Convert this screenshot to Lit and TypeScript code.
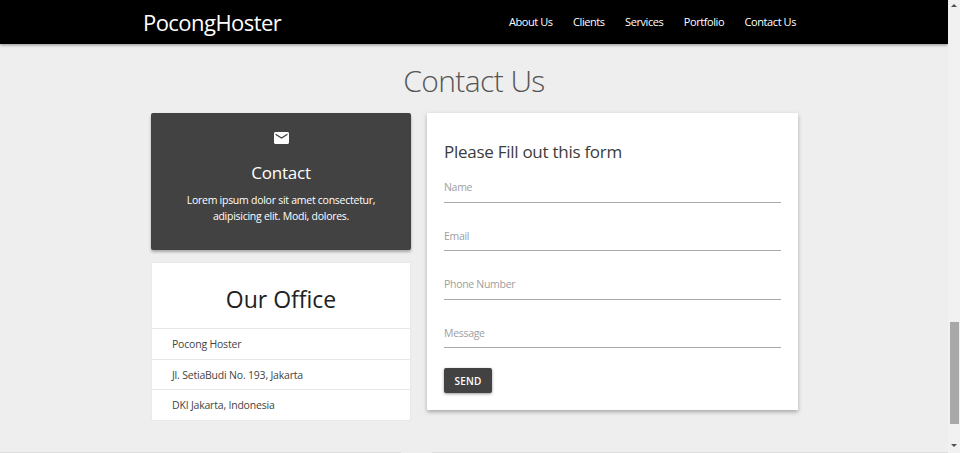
import { LitElement, html, css } from "lit";
import { customElement } from "lit/decorators.js";

@customElement("app-root")
export class AppRoot extends LitElement {
  static styles = css`
    :host { display: block; width: 960px; height: 453px; overflow: hidden; font-family: "Open Sans", "Noto Sans", sans-serif; }
    * { box-sizing: border-box; }
    .shell { display: flex; height: 453px; }
    .page { width: 948px; background: #eee; display: flex; flex-direction: column; }
    nav { height: 44px; background: #000; box-shadow: 0 1px 3px rgba(0,0,0,.4); display: flex; align-items: center; justify-content: space-between; padding: 0 152px 0 143px; color: #fff; flex: none; }
    .brand { font-size: 22px; letter-spacing: -0.55px; line-height: 44px; }
    .links { display: flex; gap: 20.4px; font-size: 11px; letter-spacing: -0.42px; padding-bottom: 1px; }
    h1 { margin: 0; height: 69px; font-weight: 300; font-size: 30px; letter-spacing: -0.6px; line-height: 74px; text-align: center; color: #555; flex: none; }
    .cols { display: flex; gap: 16px; padding-left: 151px; align-items: flex-start; }
    .left { width: 260px; display: flex; flex-direction: column; gap: 12px; }
    .contact { height: 137px; background: #424242; color: #fff; border-radius: 2px; box-shadow: 0 2px 3px rgba(0,0,0,.3); text-align: center; padding-top: 19px; }
    .contact svg { display: block; margin: 0 auto; }
    .contact h2 { margin: 16px 0 0; font-weight: 400; font-size: 17px; line-height: 26px; letter-spacing: -0.2px; }
    .contact p { margin: 6px 0 0; font-size: 10.5px; line-height: 16px; letter-spacing: -0.26px; }
    .office { background: #fff; border: 1px solid #e9e9e9; border-radius: 2px; height: 159px; }
    .office h2 { margin: 0; height: 65px; font-weight: 400; font-size: 23px; line-height: 72px; text-align: center; color: #212121; }
    .office div { height: 30.5px; border-top: 1px solid #e6e6e6; padding-left: 20px; font-size: 10.5px; letter-spacing: -0.2px; line-height: 30.5px; color: #444; }
    .form { width: 371px; height: 297px; background: #fff; box-shadow: 0 2px 4px rgba(0,0,0,.3); padding: 0 17px; }
    .form h3 { margin: 0; height: 55.2px; font-weight: 400; font-size: 17px; line-height: 78px; letter-spacing: -0.27px; color: #3c3c3c; }
    .field { height: 48.45px; }
    .field span { display: block; height: 34.5px; border-bottom: 1px solid #aaa; font-size: 10.5px; letter-spacing: -0.3px; line-height: 39px; color: #9e9e9e; }
    button { display: block; margin-top: 6px; width: 48px; height: 25px; border: 0; border-radius: 2px; padding: 0; background: #424242; color: #fff; font: 600 10px/26px "Open Sans", sans-serif; letter-spacing: .2px; box-shadow: 0 1px 3px rgba(0,0,0,.4); }
    .foot { margin-top: auto; display: flex; height: 1px; flex: none; }
    .foot i { background: #ddd; }
    .foot i:first-child { width: 401px; }
    .foot i:last-child { margin-left: 31px; flex: 1; }
    .bar { width: 12px; background: #f1f1f1; display: flex; flex-direction: column; align-items: center; }
    .up, .down { width: 0; height: 0; border-left: 3px solid transparent; border-right: 3px solid transparent; }
    .up { margin-top: 4px; border-bottom: 3px solid #505050; }
    .thumb { width: 9px; height: 102px; margin: 315px 0 0 1px; background: #a8a8a8; }
    .down { margin-top: 20px; border-top: 3px solid #505050; }
  `;

  render() {
    return html`
      <div class="shell">
        <div class="page">
          <nav>
            <div class="brand">PocongHoster</div>
            <div class="links"><span>About Us</span><span>Clients</span><span>Services</span><span>Portfolio</span><span>Contact Us</span></div>
          </nav>
          <h1>Contact Us</h1>
          <div class="cols">
            <div class="left">
              <div class="contact">
                <svg width="15" height="12" viewBox="2 4 20 16"><path fill="#fff" d="M20 4H4c-1.1 0-2 .9-2 2v12c0 1.1.9 2 2 2h16c1.1 0 2-.9 2-2V6c0-1.1-.9-2-2-2zm0 4-8 5-8-5V6l8 5 8-5v2z"/></svg>
                <h2>Contact</h2>
                <p>Lorem ipsum dolor sit amet consectetur,<br />adipisicing elit. Modi, dolores.</p>
              </div>
              <div class="office">
                <h2>Our Office</h2>
                <div>Pocong Hoster</div>
                <div>Jl. SetiaBudi No. 193, Jakarta</div>
                <div>DKI Jakarta, Indonesia</div>
              </div>
            </div>
            <div class="form">
              <h3>Please Fill out this form</h3>
              <div class="field"><span>Name</span></div>
              <div class="field"><span>Email</span></div>
              <div class="field"><span>Phone Number</span></div>
              <div class="field"><span>Message</span></div>
              <button>SEND</button>
            </div>
          </div>
          <div class="foot"><i></i><i></i></div>
        </div>
        <div class="bar"><div class="up"></div><div class="thumb"></div><div class="down"></div></div>
      </div>
    `;
  }
}
